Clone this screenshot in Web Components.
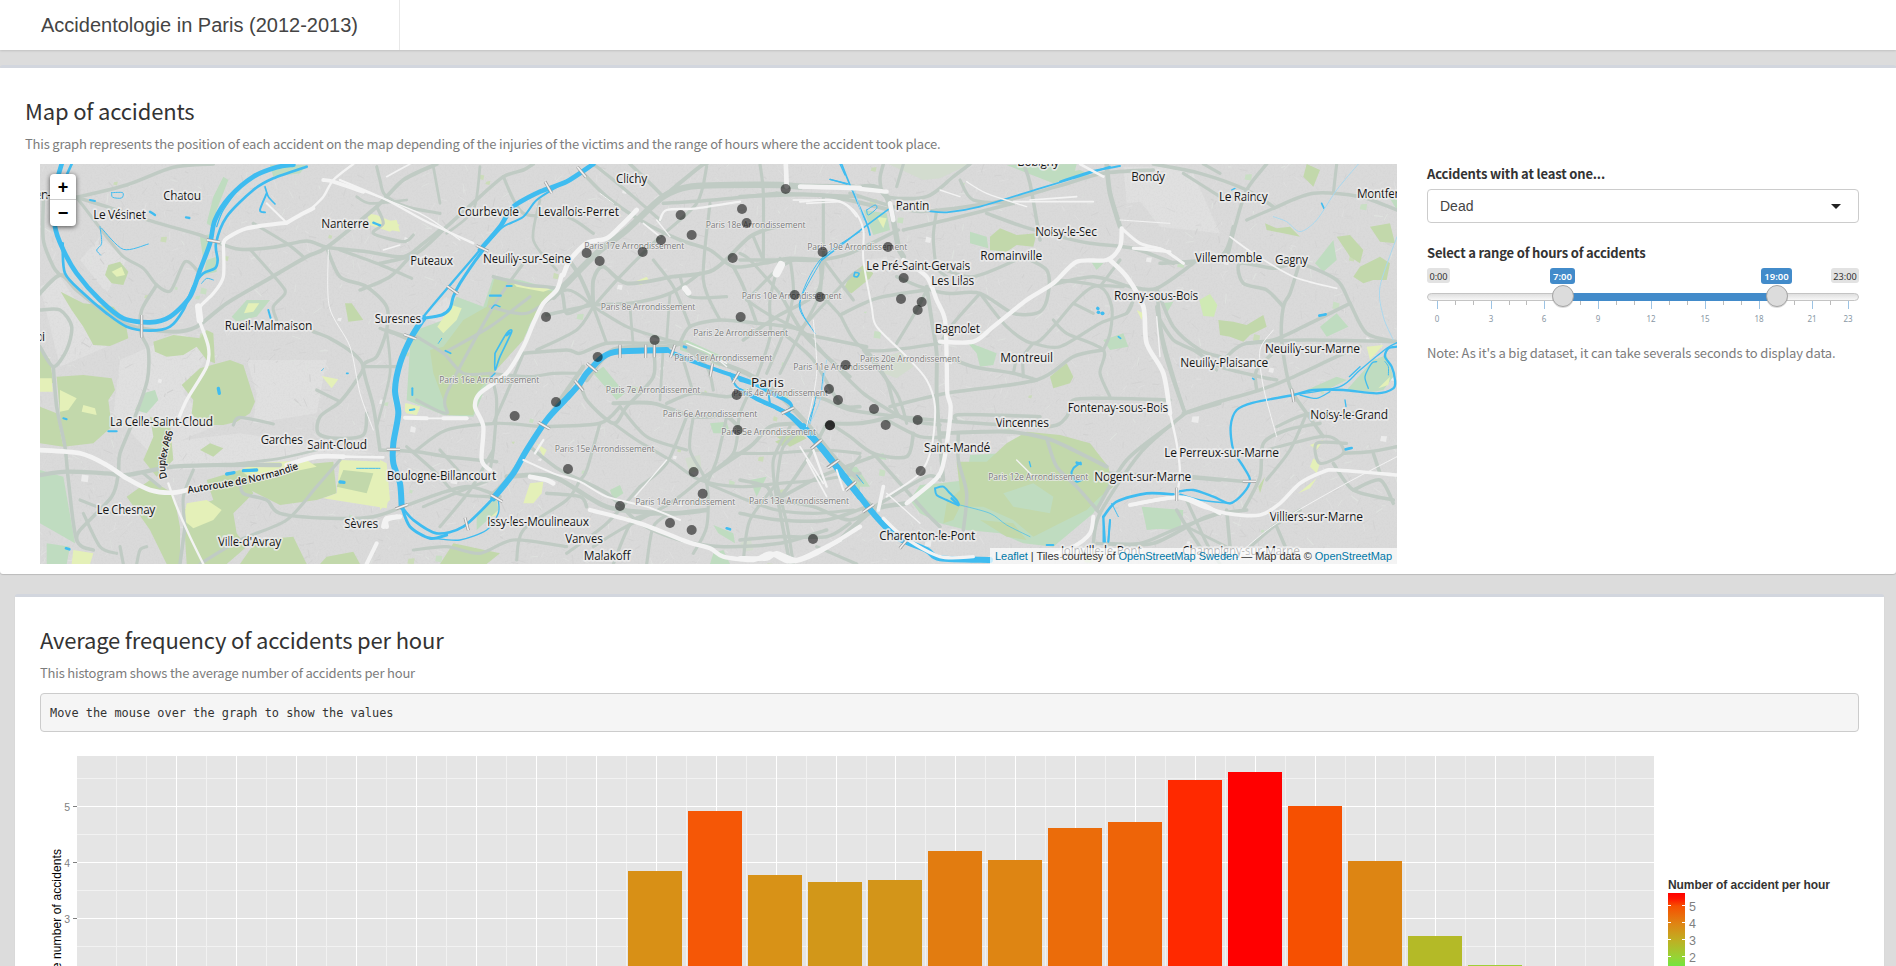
<!DOCTYPE html>
<html lang="en">
<head>
<meta charset="utf-8">
<title>Accidentologie in Paris (2012-2013)</title>
<style>
html,body{margin:0;height:966px;overflow:hidden;background:#dcdcdc;font-family:"Noto Sans CJK SC","Noto Sans",sans-serif;color:#333}
</style>
</head>
<body>
<dash-app></dash-app>
<script>
const define=(name,html,after)=>customElements.define(name,class extends HTMLElement{
  connectedCallback(){
    if(this.shadowRoot)return;
    this.attachShadow({mode:'open'}).innerHTML=html;
    if(after)after.call(this,this.shadowRoot);
  }
});

/* Text line tracked so that it fills exactly w pixels */
define('fit-text','<style>:host{display:block;white-space:nowrap}span{display:inline-block}</style><span><slot></slot></span>',function(r){
  const s=r.querySelector('span'),w=+this.getAttribute('w'),n=this.textContent.length;
  s.style.letterSpacing=((w-s.getBoundingClientRect().width)/n).toFixed(4)+'px';
});

define('top-bar',`<style>:host{display:flex;height:50px;background:#fff;box-shadow:0 1px 2px rgba(0,0,0,.12);font:20px/50px "Liberation Sans",Arial,sans-serif;color:#444}
.brand{box-sizing:border-box;width:400px;padding-left:41px;border-right:1px solid #e8e8e8}</style><div class="brand"><slot></slot></div>`);

define('content-box',`<style>:host{display:block;box-sizing:border-box;background:#fff;border-top:3px solid #d2d6de;border-radius:3px;box-shadow:0 1px 1px rgba(0,0,0,.15)}</style><slot></slot>`);

define('drop-down',`<style>:host{display:flex;align-items:center;justify-content:space-between;box-sizing:border-box;height:34px;border:1px solid #ccc;border-radius:4px;padding:0 17px 0 12px;font:14px "Liberation Sans",Arial,sans-serif;color:#444}
i{width:0;height:0;border:5px solid transparent;border-top-color:#222;border-bottom:0}</style><slot></slot><i></i>`);

define('info-pre',`<style>:host{display:block;box-sizing:border-box;height:39px;padding:0 9px;border:1px solid #ccc;border-radius:4px;background:#f5f5f5;font:11.9px/38px "DejaVu Sans Mono",monospace;color:#333}</style><slot></slot>`);

define('range-slider','<style>:host{display:block;height:62px}svg{display:block;overflow:visible}</style><div></div>',function(r){
  let s='';
  for(let i=0;i<24;i++){
    const x=Math.round(10.1+i*17.86)+.5,big=i%3===0||i===23;
    s+=`<path d="M${x} 33V${big?41:37}" stroke="${big?'#9cc3e4':'#bbb'}"/>`;
    if(big)s+=`<text x="${x-.5}" y="54" text-anchor="middle" font-size="8" fill="#8a98a5">${i}</text>`;
  }
  const tag=(x,w,t,on)=>`<rect x="${x}" y="0" width="${w}" height="${on?16:15}" rx="3" fill="${on?'#428bca':'#e2e2e2'}"/><text x="${x+w/2}" y="11.5" text-anchor="middle" font-size="${on?9.5:9.2}" ${on?'font-weight="600"':''} fill="${on?'#fff':'#333'}">${t}</text>`;
  const knob=x=>`<circle cx="${x}" cy="29" r="11" fill="#777" opacity=".25"/><circle cx="${x}" cy="28" r="10.5" fill="#dcdcdc" stroke="#a5a5a5"/>`;
  r.querySelector('div').innerHTML=`<svg width="432" height="62" font-family="'Noto Sans',sans-serif"><defs><linearGradient id="g" x2="0" y2="1"><stop stop-color="#ddd"/><stop offset="1" stop-color="#fafafa"/></linearGradient></defs>${s}
  <rect x=".5" y="25.5" width="431" height="7" rx="4" fill="url(#g)" stroke="#c4c4c4"/><rect x="136" y="25" width="214" height="8" fill="#428bca"/>
  ${tag(0,23,'0:00')}${tag(404,28,'23:00')}${tag(123,25,'7:00',1)}${tag(334,31,'19:00',1)}${knob(136)}${knob(350)}</svg>`;
});

define('hour-histogram','<style>:host{display:block}svg{display:block}</style><div></div>',function(r){
  let s='<rect x="37" width="1577" height="260" fill="#e5e5e5"/>';
  const X0=136.5,ST=59.957;
  for(const y of [22.5,78.5,134.5,190.5])s+=`<path d="M37 ${y}H1614" stroke="#f2f2f2"/>`;
  for(let k=-1;k<24;k++){const x=Math.floor(X0+(k+.5)*ST)+.5;s+=`<path d="M${x} 0V210" stroke="#f2f2f2"/>`}
  s+='<path d="M76.5 0V210M1575.5 0V210" stroke="#f2f2f2"/>';
  for(let k=0;k<24;k++){const x=Math.floor(X0+k*ST)+.5;s+=`<path d="M${x} 0V210" stroke="#fff"/>`}
  [[50.5,5],[106.5,4],[162.5,3]].forEach(([y,n])=>s+=`<path d="M37 ${y}H1614" stroke="#fff"/><path d="M33 ${y}H37" stroke="#7f7f7f"/><text x="30" y="${y+4}" text-anchor="end" font-size="10.5" fill="#7f7f7f">${n}</text>`);
  const bars=[[115,'d89016'],[55,'f55706'],[119,'d89217'],[126,'d29719'],[124,'d39519'],[95,'e27c10'],[104,'de8513'],[72,'eb6c0a'],[66,'ee6408'],[24,'ff2900'],[16,'ff0000'],[50,'f65001'],[105,'dd8513'],[180,'b4ba27'],[209,'a0cf36']];
  bars.forEach(([y,c],i)=>s+=`<rect x="${588+i*60}" y="${y}" width="54" height="${230-y}" fill="#${c}"/>`);
  s+='<text transform="translate(21 93) rotate(-90)" text-anchor="end" font-size="12" letter-spacing=".1" fill="#000">Average number of accidents</text>';
  s+='<text x="1628" y="133" font-size="12" font-weight="bold" textLength="162" fill="#333">Number of accident per hour</text><defs><linearGradient id="h" gradientUnits="userSpaceOnUse" x1="0" x2="0" y1="137" y2="210"><stop stop-color="#f00"/><stop offset=".08" stop-color="#ff1500"/><stop offset=".18" stop-color="#f65001"/><stop offset=".42" stop-color="#df8413"/><stop offset=".64" stop-color="#c0ae22"/><stop offset=".88" stop-color="#96d435"/><stop offset="1" stop-color="#74e440"/></linearGradient></defs><rect x="1628" y="137" width="17" height="80" fill="url(#h)"/>';
  [5,4,3,2].forEach((n,i)=>s+=`<path d="M1628 ${149.5+i*17}h3M1642 ${149.5+i*17}h3" stroke="#fff"/><text x="1649" y="${155+i*17}" font-size="12.5" fill="#7f7f7f">${n}</text>`);
  r.querySelector('div').innerHTML=`<svg width="1819" height="210" font-family="'Liberation Sans',Arial,sans-serif">${s}</svg>`;
});

/* ---- street map ---- all lists are in tile space: three units per screen pixel, one origin per tile */
const TILES={A:[0,0],B:[40,160],C:[380,160],D:[740,160],E:[1060,160]};
const P=s=>s.trim().split(/\s+/).map(p=>p.split(',').map(Number));
const curve=s=>{const p=P(s);let d='M'+p[0];
  for(let i=0;i<p.length-1;i++){const a=p[i-1]||p[i],b=p[i],c=p[i+1],e=p[i+2]||c,k=7;
    d+=`C${b[0]+(c[0]-a[0])/k},${b[1]+(c[1]-a[1])/k} ${c[0]-(e[0]-b[0])/k},${c[1]-(e[1]-b[1])/k} ${c}`}
  return d};
const G='#c2d8ab',T='#bfdcc0',Y='#e4f0b8',L='#d3dccf',LT='#e0e0e0';
const AREAS={B:[
 [LT,'240,600 420,520 520,560 430,700 520,800 330,880 220,760'],[LT,'620,600 860,600 830,760 640,790 650,700'],[LT,'0,380 60,350 200,560 60,620'],[LT,'350,850 600,820 1000,880 600,920 400,930'],[LT,'120,300 180,230 260,300 200,400'],
 [G,'62,395 130,430 220,440 255,480 265,535 210,558 160,555 130,500 95,450'],
 [G,'340,545 400,525 480,535 500,510 520,520 525,610 500,600 470,560 430,585 380,590 345,575'],
 [G,'425,675 480,625 570,600 610,615 645,725 630,760 590,785 550,795 480,795 455,760 460,720'],
 [G,'50,650 130,645 215,655 225,690 205,720 215,800 160,850 70,860 60,760'],[Y,'60,690 110,715 85,750 60,755'],[Y,'130,735 165,745 170,765 125,755'],
 [G,'0,560 30,600 40,670 0,665'],[Y,'0,655 35,655 38,695 0,695'],[G,'0,740 50,760 70,860 0,850'],
 [T,'285,750 310,700 345,690 355,720 320,760'],[G,'330,770 390,790 400,900 350,950 310,900 340,830'],
 [G,'480,870 510,850 550,865 520,890'],[G,'260,1010 330,960 400,1000 420,1100 420,1212 380,1212 330,1110'],
 [G,'500,960 600,930 640,1000 580,1060 590,1120 620,1160 560,1212 440,1212 430,1050 520,1020'],[Y,'430,1080 440,1030 500,1020 545,1050 520,1080 460,1105'],
 [G,'600,930 720,920 880,905 890,1000 830,1020 720,1035 620,985'],[Y,'600,930 650,910 800,900 830,920 640,960'],
 [Y,'890,1000 900,900 1030,905 1045,1010 1040,1045 850,1015'],[G,'910,930 1000,940 980,1000 890,980'],
 [G,'650,1140 760,1130 800,1212 600,1212'],[G,'860,1190 940,1175 960,1212 840,1212'],[G,'1240,1150 1380,1180 1340,1212 1200,1212'],
 [T,'0,930 70,950 105,1150 0,1090'],[T,'20,1150 90,1160 80,1212 20,1212'],[Y,'100,1170 160,1180 150,1212 95,1212'],
 [G,'205,315 240,305 265,335 250,375 215,370 195,345'],[Y,'215,335 245,320 255,345 230,350'],
 [T,'575,470 620,420 690,420 650,470 590,485'],[Y,'612,460 625,430 658,430 640,455'],[Y,'845,648 895,658 875,685'],
 [Y,'980,160 1010,165 1080,195 1050,215 990,195'],[T,'500,300 530,290 530,335 490,345'],[T,'500,190 520,110 550,50 565,60 530,150 515,200'],
 [T,'690,15 800,15 780,40 700,50'],[T,'480,230 520,220 490,300'],[G,'915,430 935,430 970,480 925,485'],[Y,'1095,730 1140,740 1130,765 1095,755']],
C:[
 [LT,'120,470 200,410 230,450 180,490'],[T,'230,410 310,440 340,350 420,360 530,390 460,470 440,520 330,650 280,770 190,765 80,720 90,560 110,510 190,480'],
 [G,'320,440 345,350 520,395 450,490 430,540 330,650 290,700 280,765 200,765 190,720 160,640 150,570 190,560 250,480'],[Y,'172,500 215,435 245,445 230,480 190,520'],[Y,'400,370 520,385 490,395 410,380'],[Y,'80,730 120,740 110,765 78,760'],
 [Y,'430,1030 450,970 490,965 485,1000 460,1030'],[Y,'470,850 500,870 490,890'],[Y,'765,365 800,350 810,365 780,375'],[T,'640,640 670,620 735,700 710,720'],[T,'690,990 720,975 730,1000 700,1020'],
 [T,'900,545 920,540 1030,590 1020,620 960,590 900,570'],[T,'990,790 1040,785 1050,820 1000,820'],[G,'1190,830 1260,820 1280,835 1230,860'],[L,'915,895 960,885 965,930 930,940'],[L,'1080,1150 1110,1130 1120,1170 1090,1175'],
 [T,'1000,1095 1060,1120 1065,1150 1015,1120'],[Y,'330,1050 355,1030 350,1065 310,1080'],[T,'290,1060 350,1015 355,1050 290,1110'],[T,'1110,960 1160,950 1130,1010'],[T,'1000,1180 1030,1170 1050,1212 990,1212'],[Y,'0,900 20,910 30,1020 0,1050'],[T,'1390,920 1440,960 1440,1000'],[Y,'0,185 50,180 60,215 0,205']],
D:[
 [LT,'1150,20 1330,20 1340,110 1160,130'],[L,'445,12 690,12 600,55 550,60'],[T,'800,15 1010,12 1000,50 940,70'],[LT,'380,300 440,290 450,330 400,340'],
 [G,'310,390 330,345 370,315 400,340 390,355 335,400'],[T,'370,150 440,160 450,210 400,225'],[Y,'410,170 440,175 430,205'],
 [G,'750,230 780,205 830,225 890,220 880,260 830,255 800,275 750,270'],[T,'690,215 740,230 745,265 690,250'],
 [L,'440,590 480,575 520,620 470,655 430,640'],[T,'680,545 720,560 770,580 760,615 720,620 710,580'],[G,'930,650 960,625 980,610 1000,650 990,670 940,685'],[T,'1090,540 1150,520 1165,560 1110,570'],[Y,'1190,450 1210,460 1205,480'],[T,'1050,300 1090,310 1070,330'],
 [T,'540,975 600,970 680,960 690,885 790,880 890,840 900,860 1020,900 1100,990 1060,1060 1000,1110 940,1160 850,1150 780,1120 680,1110 600,1090 540,1060 510,1020'],
 [G,'650,905 740,905 800,850 860,815 960,825 1050,850 1105,920 1120,980 1080,1010 1040,1050 960,1090 880,1130 820,1080 730,1040 660,1040 640,1080 610,1090 620,1030 660,990'],
 [G,'720,1080 820,1090 860,1140 800,1130'],[T,'790,1000 880,970 940,1010 930,1060 820,1040'],[LT,'800,830 840,825 835,890 805,880'],[T,'1210,1040 1330,1060 1320,1100 1220,1110'],[G,'105,845 160,820 170,835 130,860'],[T,'300,920 350,920 390,980 360,980'],[T,'380,890 430,880 440,900']],
E:[
 [LT,'190,60 400,40 480,220 300,200'],[G,'730,50 740,12 780,30 760,80'],[T,'0,40 60,30 100,50 0,60'],[G,'615,190 650,205 690,200 720,230 670,220 620,210'],[T,'765,310 820,240 830,300 790,335'],[G,'830,230 870,225 910,270 900,310 870,290'],[G,'900,320 960,290 990,310 980,360 940,360 910,370 880,350'],[G,'930,200 990,190 1005,250 960,245'],[T,'980,100 1011,120 1011,150'],['#cfe9b4','418,420 450,402 472,435 462,470 430,468'],
 [G,'475,480 520,485 560,495 610,465 620,500 570,525 550,545 510,530 480,525'],[T,'780,500 830,460 865,500 800,530'],[Y,'920,560 970,555 930,600'],[T,'860,690 940,600 980,585 1000,650 970,690 940,695 850,690'],[T,'740,690 830,650 860,660 800,690'],[Y,'955,685 990,650 985,675'],
 [Y,'750,855 790,840 770,870'],[Y,'760,895 780,910 770,940 750,920'],[T,'245,1040 370,1050 360,1110 260,1105'],[Y,'715,1000 770,955 750,985'],[T,'310,430 340,425 320,460'],[G,'600,1000 615,950 595,980']]};

/* roads: [width, points] */
const ROADS={B:[
 [9,'110,112 260,75 400,22 520,12'],[9,'110,112 200,140 340,185 480,225 520,243 600,268 700,262 800,243 860,262 980,275 1090,290 1150,250 1200,210'],
 [8,'110,112 200,230 250,290 310,325 350,375 392,392 435,305 475,335'],[9,'350,375 305,450 303,520 325,570 322,660 285,770 240,880 235,940 215,1010 120,1110 110,1140'],
 [10,'-10,410 60,345 110,390 200,460 280,500 400,515 470,500 560,430 680,360 800,290 860,262 1010,140 1090,60 1190,12'],
 [9,'10,120 10,240 40,320 60,345'],[9,'0,450 60,450 95,500 80,570 40,620 0,560'],[9,'40,620 50,740 75,860 85,960 110,1140 160,1170'],
 [11,'0,945 80,935 200,940 260,945 400,920 560,915 720,915'],[7,'560,915 720,895 830,870'],[8,'630,268 720,370 735,400 700,440 710,480'],[9,'820,515 870,535 940,580 970,620 950,660 900,725 840,770 835,820 890,835 970,825 980,760'],[8,'830,690 900,725'],
 [9,'860,262 900,350 980,380 1040,440 1040,510 1010,590 970,620 1000,740 1020,870'],[8,'900,270 1010,310 1115,355'],[8,'640,190 740,250 790,290'],[7,'950,110 990,130 1100,120'],[8,'1010,140 1030,190 1000,220 1090,245 1120,225'],
 [8,'1010,20 1020,60 1035,105 1100,140 1200,160'],[9,'1040,510 1100,530'],[8,'970,620 1080,620'],[8,'435,1100 430,1010 460,930'],[9,'435,1100 420,1212'],
 [9,'600,960 610,1000 680,1020 720,1060 870,1075 1000,1070 1090,1040 1200,1000 1290,980 1380,1010'],[8,'480,1212 600,1140 740,1080 830,980 900,900'],[8,'120,1020 220,1060'],[8,'240,1160 250,1212'],[8,'580,795 600,772 700,792'],[8,'310,940 360,980'],[8,'290,1212 300,1170 320,1160'],
 [9,'960,390 1050,350 1110,290'],[7,'1180,20 1200,130'],[7,'1040,510 1050,640 1010,800'],[8,'130,1060 180,1160 230,1180']],
C:[
 [16,'520,410 560,370 650,280 740,210 850,110 930,80 1050,75 1200,75 1260,80'],[9,'0,310 110,280 200,200 300,110 370,50 430,30 460,12'],[8,'370,50 430,160 560,170 640,220'],[9,'600,30 680,110 780,180 900,240 990,270 1060,320 1150,310 1230,295 1330,300'],
 [8,'640,12 700,60 760,110 840,180'],[10,'850,110 960,20 980,12'],[9,'850,110 800,60 750,12'],[10,'640,440 640,360 670,320 740,370 880,350 1000,330 1110,230 1190,200'],[9,'340,350 440,375 540,390 560,460 630,430'],[9,'500,465 640,435 750,430 870,400 960,340'],
 [8,'640,440 740,500 830,530 900,550'],[8,'640,440 680,550'],[8,'640,440 590,510 470,570'],[8,'640,440 560,390 440,460 330,440'],[8,'640,440 720,350 830,240 950,130 980,20'],[9,'430,580 560,570 600,580 680,550 800,550 880,545'],[10,'640,440 600,350 560,290'],
 [12,'900,550 1000,600 1100,640 1180,690 1280,790 1370,900 1440,960'],[11,'610,620 520,750 450,860 380,960 330,1010'],[12,'620,660 700,570 860,560 900,550'],[9,'900,550 930,500 1020,480 1130,490 1260,510 1340,590 1410,650'],[8,'930,500 880,380 820,300'],[8,'1020,480 970,360 990,130'],
 [9,'1130,490 1090,380 1060,320'],[8,'1200,295 1170,420 1170,530 1130,650 1080,760 1060,880 960,960'],[8,'1230,295 1240,400 1210,520 1160,640'],[9,'1330,300 1310,400 1190,470 1090,540'],[8,'1260,510 1400,360 1440,330'],[8,'1260,510 1160,460 1100,420'],[8,'1330,300 1420,420'],
 [9,'1210,520 1300,600 1380,730 1440,740'],[10,'700,730 820,730 940,770 1040,770 1090,820'],[9,'820,560 820,650 740,740 700,790 620,720 600,660'],[8,'720,740 800,830 920,870'],[9,'500,800 660,790 720,740'],[8,'660,790 620,930 600,960'],[8,'700,790 770,840 870,900 960,960 1080,980 1200,970 1320,960 1440,940'],
 [9,'860,730 940,700 1040,710 1080,700'],[8,'940,770 930,870 980,970 980,1100 940,1180'],[8,'1000,690 980,620 900,550'],[9,'450,860 540,930 680,1000 780,1090 900,1140 1030,1160 1200,1150 1340,1110'],[12,'380,950 520,950 680,1040 860,1060 980,1050'],[8,'780,980 860,910 920,770'],[8,'960,960 870,1030 720,1110 640,1160'],
 [10,'960,960 1110,860 1170,800 1260,790'],[8,'1190,970 1210,860 1280,800'],[8,'1190,970 1220,1090 1240,1212'],[8,'980,970 1100,1020 1190,1050 1300,1060 1420,1050'],[8,'1190,970 1110,1080 1090,1200'],[8,'100,1170 200,1160 300,1180 400,1140 560,1160'],[8,'410,1200 430,1110 560,1020 600,960'],
 [9,'0,870 110,875 200,890 350,905'],[8,'110,870 200,810 350,790 480,800'],[8,'330,640 350,720 340,870 330,930'],[8,'110,720 200,760 200,700 340,440 430,310'],[8,'110,530 190,580 250,640 330,640'],[8,'190,580 330,500 450,410'],[8,'90,540 40,520 0,505'],
 [8,'80,860 170,940 230,1000 330,1010'],[8,'180,870 260,960'],[8,'340,870 270,990 180,1100'],[8,'130,1040 250,990 330,960'],[8,'430,580 380,700 340,790'],[8,'330,640 450,650 520,640 600,640'],[9,'1190,100 1440,110'],[9,'850,130 1000,120 1190,100'],[8,'1140,12 1150,100 1150,300'],[8,'1330,110 1330,300'],
 [8,'1120,230 1150,300'],[8,'700,1212 760,1080 860,1060'],[8,'800,1212 820,1100 870,1060'],[8,'560,1180 680,1090 780,980'],[8,'1100,420 1190,330 1240,300'],[8,'900,350 930,410 1040,410'],[8,'1060,880 1180,880 1330,870 1440,880'],[7,'750,440 760,560'],[7,'870,400 860,540'],[8,'1040,770 1010,900 980,970'],[8,'940,700 910,600'],[7,'850,560 840,720'],[9,'500,1000 600,1010 620,1040'],[7,'480,120 460,240 530,330'],[7,'200,220 280,150 300,20']],
D:[
 [14,'340,85 400,80 440,110 460,180 475,260 490,290'],[12,'0,75 340,80'],[10,'0,110 240,105 450,150'],[9,'430,12 420,60 440,110 560,110 640,50 690,12'],[9,'330,100 500,150 600,150 800,120 950,80 1090,40 1240,30'],[9,'490,210 620,180 820,130'],
 [9,'475,210 330,280 240,300 150,300 0,300'],[8,'590,150 580,230 590,320 620,350'],[9,'740,160 850,200 960,230 1050,250 1180,265 1300,310'],[9,'850,290 920,330 925,400 900,455 820,460 720,400 620,400 540,380 470,350'],[8,'720,400 640,490 600,550'],[8,'720,400 800,500 880,550 940,500 1000,430 1060,380 1150,380'],
 [10,'560,380 575,480 590,580 590,700 600,850 610,960'],[9,'300,465 410,415 560,390'],[8,'300,465 380,570 600,550'],[8,'470,550 530,450 560,390'],[8,'240,400 300,465'],[8,'240,300 240,400 180,520 120,640'],[9,'120,400 190,520 270,600 370,700 480,770'],[8,'120,400 30,300 0,280'],
 [9,'180,520 380,560'],[9,'380,570 440,660 480,770 600,795'],[8,'370,570 470,700 500,790'],[9,'450,740 620,700 890,660 1000,590 1090,570'],[9,'620,590 700,620 820,640 890,660'],[8,'880,550 850,590 850,650'],[8,'830,590 820,640'],[8,'880,550 960,560 1080,490 1160,460 1180,420'],
 [9,'200,700 260,720 330,750 480,770 650,785 920,800 980,770 1000,720 1100,715 1290,720'],[9,'650,785 650,765 750,765 900,770'],[10,'270,790 360,790 460,770'],[9,'270,790 330,830 400,880 500,890 520,820'],[9,'440,780 540,830 620,830'],[10,'600,820 800,815 920,835 1000,870 1100,920'],
 [9,'920,835 950,920 1010,980 1080,1060'],[9,'655,820 655,900 680,1000 670,1110'],[9,'0,960 80,980 110,1020 200,900 260,790'],[9,'110,1020 240,950 400,890'],[9,'110,1020 220,1040 330,1080 420,1030 560,950 600,960'],[9,'0,1060 120,1080 260,1080 380,1040'],[8,'110,1020 100,900 150,800'],
 [9,'110,1000 130,1110 150,1212'],[9,'0,1140 120,1130 260,1130 330,1090'],[8,'230,1160 350,1212'],[9,'400,880 480,970 560,1060 600,1100'],[8,'360,890 320,960 400,1040'],[12,'300,1140 400,1050 500,1030'],[9,'1360,310 1250,385 1170,380 1060,350 930,375'],[9,'1250,385 1300,500 1380,570 1440,590'],
 [9,'1250,385 1265,520 1300,650 1335,760'],[8,'1160,460 1190,400'],[9,'1335,760 1440,730'],[9,'1335,760 1200,880 1080,1060 1060,1150'],[9,'1110,940 1310,950 1440,960'],[8,'1335,1010 1400,1150 1440,1212'],[8,'1000,430 1060,460'],[8,'940,480 980,520 1090,570 1080,640 1110,710'],
 [12,'1100,12 1110,100 1140,200'],[8,'1070,1150 1200,1150 1300,1110 1440,1060'],[9,'850,12 870,70 900,240'],[8,'660,60 700,120 820,130'],[8,'490,12 470,80'],[8,'590,320 700,350 850,290'],[8,'1390,12 1440,40'],[8,'1330,40 1440,110']],
E:[
 [9,'280,12 420,40 560,90 640,140'],[9,'640,145 760,100 900,110 1011,150'],[8,'640,145 560,180'],[9,'620,12 560,90 525,200 505,280'],[8,'820,100 830,12'],[9,'300,310 480,290 520,200'],[9,'380,310 430,300'],[9,'715,320 690,400 670,440 665,540 690,680 740,760 790,830'],
 [9,'670,440 620,390 550,370 540,310 640,325 715,310 830,360 870,430 920,520 1011,545'],[9,'560,550 640,540 730,500 870,430'],[9,'500,590 560,550 740,540 1011,545'],[9,'300,480 340,540 400,570 480,620 600,650 650,660'],[8,'410,570 470,630'],[9,'370,760 460,730 600,690 690,655 830,590 900,560'],
 [9,'590,690 590,630 660,560'],[9,'340,790 200,900 110,1050'],[9,'290,440 310,560 340,660 375,760'],[8,'650,800 750,760 920,760'],[9,'550,1050 600,950 610,850 680,810 780,790'],[8,'620,870 780,830 830,840 850,880 780,910 770,850 860,850'],[9,'1011,860 930,875 850,880'],[9,'940,880 960,940'],
 [9,'820,910 880,990 1000,1020'],[9,'880,990 960,960 1000,1030'],[9,'350,1050 380,1100 440,1190'],[9,'130,1150 280,1150 440,1070 560,1050'],[9,'400,950 560,965'],[9,'500,1050 510,1160'],[9,'650,1100 680,1170'],[9,'560,1170 640,1100 720,1050'],[7,'380,1100 500,1160'],[8,'740,760 690,870 620,960'],[8,'0,360 120,380 155,440 150,520 130,570'],[8,'120,380 180,300']]};

/* motorways and rail yards */
const WHITE={B:[
 [14,'-10,870 120,880 200,915 260,955 330,990 400,998 460,985'],[14,'740,915 830,890 910,890'],[8,'910,890 1030,892'],[12,'550,250 560,235 620,205 740,188'],[12,'740,188 790,160 820,145'],[6,'740,188 680,130'],[7,'810,150 850,110 880,60 940,12'],[10,'550,250 550,350 520,400 480,440 475,470 505,560 500,620 440,720 410,790'],[7,'385,970 410,1040 450,1130 490,1212'],[20,'475,440 480,480'],
 [12,'850,60 880,65 970,95'],[7,'900,60 1040,120 1150,180 1300,250'],[4,'920,75 1140,160 1260,240'],[3,'865,270 868,440 930,560 960,700 1000,810'],[14,'1070,1070 1040,1080 1040,1100'],[12,'1010,1150 980,1212'],[5,'1040,50 1110,12'],[4,'1030,270 1080,255']],
C:[
 [14,'550,345 570,300 620,250 680,235 720,200 770,150'],[13,'545,345 530,390 490,430 460,490 430,560 380,640 300,700 285,740 310,800 305,900 330,930'],[12,'75,773 140,775'],[5,'140,775 220,775'],[12,'190,775 260,775'],[13,'1217,12 1220,80'],[13,'1260,80 1440,83'],[7,'840,180 860,150 950,145 1080,125'],[5,'790,190 840,230'],[4,'830,180 870,230'],
 [24,'1203,315 1190,340'],[18,'915,385 925,398'],[14,'450,950 500,960 520,970'],[13,'630,1050 780,1090 920,1145 990,1165 1030,1190 1120,1200 1170,1180 1230,1205 1310,1180 1440,1100'],[6,'430,900 520,940 600,965 680,1010 800,1040 900,1080'],[4,'765,1010 860,900'],[7,'465,880 490,840'],
 [14,'10,1100 20,1075 60,1070'],[4,'1000,590 1040,610'],[5,'1260,860 1330,970'],[7,'1300,870 1340,980'],[5,'1240,120 1380,125 1430,170'],[3,'660,100 700,130'],[4,'920,550 990,580 1040,620'],[3,'1280,800 1310,640 1300,480']],
D:[
 [13,'138,12 140,80'],[13,'180,80 340,85 440,95'],[14,'450,130 460,180'],[13,'490,300 560,350 590,420 615,480 620,600 622,700 632,740 625,820 610,910 590,955 500,1030'],[6,'180,125 280,120 340,150 370,210 370,300 395,440 410,500 500,590 560,660 585,740 575,860 540,940 440,1010'],
 [13,'600,545 700,545 760,500 860,420 940,370 1010,305 1100,300 1140,260 1145,205'],[14,'1110,300 1160,350 1210,440 1220,550 1270,640 1290,760'],[7,'1290,760 1310,850 1320,940 1310,1010'],[9,'1145,205 1200,250 1270,270 1330,310'],[9,'1180,265 1290,275'],[5,'200,130 300,125'],
 [14,'0,1195 80,1195 110,1180 170,1200 240,1170 300,1140'],[10,'430,1075 490,1130 600,1190 700,1190'],[11,'430,980 415,1050'],[4,'440,1000 540,1090'],[12,'1060,1070 1050,1120 1000,1160 920,1190'],[11,'1170,1035 1330,1012 1440,1060'],[5,'820,125 1060,125'],[4,'680,65 740,100 860,140'],[3,'1140,180 1290,190'],[4,'600,90 660,110'],[5,'870,120 1010,110'],[8,'1020,12 1090,50'],[5,'200,900 260,1010'],[6,'290,930 310,990'],[4,'830,900 880,950']],
E:[
 [11,'210,1035 350,1012 430,1040 500,1060 600,1065 660,1030 720,970 790,935 830,930 1011,945'],[5,'510,230 580,280 700,350 830,385'],[3,'1011,890 840,980 650,1090 550,1170'],[3,'640,510 600,570 610,680 650,830'],[6,'220,265 300,265 370,310'],[4,'290,470 300,590']]};
const WATER={B:[
 [14,'65,12 45,90 45,200 70,270 110,340 180,420 250,475 330,487 390,470 450,410 480,330 510,250 525,180 570,110 640,50 710,22 760,14'],[8,'95,12 80,45'],[8,'68,250 75,340 130,400 200,460 260,500 330,512 390,500 430,450 460,380 490,340 525,325 533,300 528,250 560,170 640,90 700,55 800,20'],[4,'530,200 550,150 600,80'],
 [5,'675,80 685,110 705,132'],[6,'680,100 660,150 675,157'],[3,'180,200 185,250 170,270 182,285'],[3,'185,205 250,268 325,252'],[3,'215,98 248,98 245,114 218,112 215,98'],[6,'150,120 165,123'],[7,'330,155 345,165'],[7,'438,172 448,174'],[6,'685,450 692,475'],[3,'485,370 500,355 520,360'],[7,'1000,188 1020,196'],[10,'535,685 538,700'],[10,'560,942 582,938'],[10,'610,932 650,930'],[10,'900,966 912,967'],[6,'205,814 230,814'],[6,'70,775 80,778'],[3,'845,632 850,626'],[5,'920,640 924,640'],[8,'78,1165 88,1168'],[3,'950,925 1020,925']],
C:[
 [14,'640,12 560,65 480,95 400,140 360,200 300,270'],[6,'540,75 470,120 430,170 370,200 330,240'],[7,'300,270 240,340 180,410 130,470'],[9,'310,270 280,310 240,370 220,410 210,445 185,465 130,475'],[18,'130,475 95,530 60,610 45,690 55,760 40,850 40,910 60,970 65,1040'],
 [8,'65,1040 100,1080 170,1120 250,1100 340,1015'],[9,'65,1040 90,1100 150,1135 200,1125'],[4,'160,1135 240,1140 320,1110 355,1060 355,1020'],[18,'340,1015 400,940 440,870 500,780 560,715 600,670 620,640 670,590 720,574 860,570'],[12,'860,570 940,605 1040,640 1110,665'],
 [6,'1050,640 1070,680 1130,720 1200,750'],[6,'1110,665 1170,700 1210,720 1235,740 1225,760'],[5,'1165,690 1170,735'],[12,'1190,745 1230,765 1270,800'],[20,'1270,800 1330,870 1400,960 1440,1010'],[5,'345,580 380,520 395,515 360,590 345,630 345,580'],[8,'380,525 390,518'],[7,'330,407 362,407'],[4,'335,445 345,435 360,440'],[6,'380,378 395,378'],[3,'175,550 185,535'],[5,'196,572 212,580'],[6,'97,685 97,705'],[6,'90,750 103,748'],[4,'1380,12 1395,45'],[4,'1350,58 1400,72'],[3,'1440,215 1320,300 1260,430 1305,520'],[3,'1305,730 1280,800'],[8,'1040,1105 1050,1108'],[4,'330,655 345,640'],[8,'912,560 918,562'],[3,'1330,640 1325,690']],
D:[
 [18,'190,800 250,870 330,970 400,1060 470,1130 560,1170 600,1195 750,1200'],[9,'0,660 60,680 140,720 155,740 140,755'],[12,'0,690 60,720 140,760 210,830'],[5,'85,690 90,735'],[5,'445,148 375,200 245,300'],[3,'245,300 178,430 212,500'],[5,'305,12 330,75 380,190 390,225'],[4,'270,58 325,72'],[3,'380,150 405,135 410,145 385,165 380,150'],[5,'565,153 620,157 720,140 900,85 1000,55 1110,20'],
 [5,'345,337 357,340 352,350 342,348 345,337'],[6,'585,985 610,980 630,1000 650,1020 655,1035 620,1020 590,1005 585,985'],[8,'635,1015 655,1035'],[6,'1022,908 1000,925 995,945 1010,965 1025,960'],[8,'1010,908 1022,912'],[4,'868,905 872,920'],[3,'350,945 370,970'],[10,'1073,445 1074,446'],[10,'1075,457 1076,457'],[11,'1087,460 1088,460'],[3,'230,700 210,790'],[2,'660,1035 750,1060 800,1095 870,1130'],[6,'1095,1145 1090,1070'],[6,'1105,1145 1110,1080'],[6,'920,1155 940,1155']],
E:[
 [5,'130,1145 130,1070'],[5,'145,1145 150,1080'],[8,'130,1070 170,1025 260,1000 340,1003'],[7,'355,995 400,990 460,1010 510,1030 550,1000 570,960 550,920 520,870 512,800 530,750 580,728 700,705 760,690 850,690 950,700 1000,685 1005,660 995,620 975,590 985,565 1011,560'],
 [5,'360,1003 420,1020 510,1030'],[4,'700,705 840,680 900,630 980,565 1011,548'],[4,'720,705 770,715 810,695'],[6,'0,65 90,35 180,18'],[8,'778,467 797,463'],[4,'925,685 915,650 935,610 950,605'],[3,'975,605 985,620 985,645'],[8,'857,868 875,864'],[4,'855,720 858,740'],[5,'785,130 792,145'],[4,'515,90 525,85'],[5,'578,655 582,658'],[4,'868,650 900,620'],[5,'175,530 182,535'],[3,'155,1030 175,1070']]};
const THINW={E:['895,12 830,90 770,180 720,215 680,185 640,170','1011,230 960,380 970,470 1000,540'],D:['260,600 240,720 210,790','340,80 370,180']};
/* bridges: x,y,angle */
const BRIDGES={B:['520,243,10','305,485,90','305,513,90','1238,390,35','1110,530,20','1327,265,25','1060,868,0','1085,1040,-20','1280,1092,75','1370,1015,30'],C:['505,82,60','605,36,50','720,574,90','797,574,90','823,572,90','878,574,110','994,630,100','636,623,40','597,677,50','492,797,30','1068,652,120','1223,752,-25','1308,853,-40','1358,912,-35','1412,978,-40'],D:['143,752,-25','230,852,-40','280,912,-35','333,978,-40','385,1045,-35','492,1150,-50'],E:['568,964,0','698,706,80','350,1003,90']};

const TOWNS={B:[['Chatou',370,121,483],['Le Vésinet',160,178,318],['Nanterre',844,205,987],['Courbevoie',1253,167,1437],['Puteaux',1111,315,1239],['Suresnes',1004,489,1144],['Rueil-Malmaison',554,510,817],['La Celle-Saint-Cloud',210,797,519],['Garches',662,851,789],['Saint-Cloud',802,866,981],['Boulogne-Billancourt',1040,959,1369],['Le Chesnay',170,1063,346],['Sèvres',913,1103,1015],["Ville-d'Avray",534,1157,724],['en-',-14,116,33],['oi',-12,543,15]],
C:[['Clichy',708,70,802],['Levallois-Perret',474,168,717],['Neuilly-sur-Seine',309,308,573],['Issy-les-Moulineaux',322,1099,627],['Vanves',556,1150,669],['Malakoff',611,1200,752]],
D:[['Bobigny',832,19,958],['Bondy',1174,63,1275],['Pantin',467,151,568],['Noisy-le-Sec',886,229,1071],['Romainville',721,299,907],['Le Pré-Saint-Gervais',379,330,691],['Les Lilas',574,375,703],['Rosny-sous-Bois',1122,420,1375],['Bagnolet',584,518,720],['Montreuil',781,605,939],['Vincennes',767,802,927],['Fontenay-sous-Bois',983,757,1285],['Saint-Mandé',552,875,751],['Nogent-sur-Marne',1063,962,1354],['Charenton-le-Pont',418,1141,706],['Joinville-le-Pont',963,1185,1205]],
E:[['Le Raincy',477,122,623],['Montfermeil',891,114,1084],['Villemomble',405,306,607],['Gagny',645,313,744],['Neuilly-sur-Marne',615,579,900],['Neuilly-Plaisance',361,621,625],['Noisy-le-Grand',751,776,984],['Le Perreux-sur-Marne',313,892,657],['Villiers-sur-Marne',629,1084,909],['Champigny-sur-Marne',367,1185,720]]};
const ARR={C:[['17e',613,266],['18e',977,203],['8e',662,451],['10e',1085,418],['2e',940,528],['1er',883,602],['16e',178,668],['7e',677,698],['4e',1060,708],['6e',848,770],['5e',1024,824],['15e',524,877],['14e',766,1034],['13e',1107,1031]],D:[['19e',202,271],['11e',160,629],['20e',360,605],['12e',745,959]]};
const DOTS={C:'1217,87 902,165 1086,147 1100,189 935,225 843,240 788,276 620,279 659,303 1058,294 498,471 1244,405 1320,411 1082,471 824,540 653,591 1328,276 1397,615 1347,687 1374,720 1070,705 1073,810 1350,796 1350,796 528,726 404,768 564,927 941,936 968,1001 720,1038 870,1089 935,1110 1299,1137',D:'444,261 491,354 483,417 545,426 533,450 402,747 437,795 533,780 542,933'};

define('leaflet-map',`<style>
:host{display:block;position:relative;width:1357px;height:400px;overflow:hidden;background:#d9d9d9}
svg{display:block}
.zoom{position:absolute;left:10px;top:10px;width:26px;border-radius:4px;box-shadow:0 1px 5px rgba(0,0,0,.65);background:#fff;color:#000;font:bold 18px/26px "Liberation Sans",Arial,sans-serif;text-align:center}
.zoom div{height:25px}.zoom div+div{border-top:1px solid #ccc;height:26px}
.attr{position:absolute;right:0;bottom:0;height:16px;padding:0 5px;background:rgba(255,255,255,.7);font:11px/16px "Liberation Sans",Arial,sans-serif;color:#333}
.attr b{font-weight:normal;color:#0078a8}
</style><div class="tiles"></div><div class="zoom"><div>+</div><div>−</div></div>
<div class="attr"><fit-text w="397"><b>Leaflet</b> | Tiles courtesy of <b>OpenStreetMap Sweden</b> — Map data © <b>OpenStreetMap</b></fit-text></div>`,function(r){
  const layer=(src,fn)=>Object.entries(src).map(([k,v])=>`<g transform="translate(${TILES[k]}) scale(.33333)">${fn(v)}</g>`).join('');
  const lines=(c,m=1)=>v=>v.map(([w,p])=>`<path d="${curve(p)}" stroke="${c}" stroke-width="${w*m}"/>`).join('');
  let seed=7;const rnd=()=>(seed=(seed*16807)%2147483647)/2147483647;
  let fine='';
  for(let i=0;i<2600;i++){const x=40+rnd()*1357,y=164+rnd()*400,a=rnd()*3.14,l=2+rnd()*7;fine+=`<path d="M${x.toFixed(1)} ${y.toFixed(1)}l${(l*Math.cos(a)).toFixed(1)} ${(l*Math.sin(a)).toFixed(1)}" stroke="${['#dfdfdf','#d1d1d1','#d3d3d3','#dfe2df'][i%4]}" stroke-width="${(.4+rnd()*.8).toFixed(1)}"/>`}
  for(let i=0;i<90;i++){const x=40+rnd()*1357,y=164+rnd()*400,w=2+rnd()*5;fine+=`<path d="M${x.toFixed(1)} ${y.toFixed(1)}l${w.toFixed(1)} ${(rnd()*3-1).toFixed(1)}l-1 ${w.toFixed(1)}l-${w.toFixed(1)} -1z" fill="${['#c9dfc4','#ececec','#cbdcb9'][i%3]}"/>`}
  let s=`<defs><filter id="n" x="0" y="0" width="1" height="1"><feTurbulence type="fractalNoise" baseFrequency=".55" numOctaves="2" seed="4"/><feColorMatrix values="0 0 0 0 .5  0 0 0 0 .5  0 0 0 0 .5  .8 0 0 0 -.33"/></filter>
  <path id="an" d="M188 493.5C225 487 262 483 301 468"/><path id="da" d="M167.5 478C161 463 170 448 173.5 430"/></defs>
  <rect x="40" y="164" width="1357" height="400" fill="#dadada"/>`;
  const fill=v=>v.map(([c,p])=>`<polygon points="${p}" fill="${c}" stroke="none"/>`).join('');
  s+=layer(Object.fromEntries(Object.entries(AREAS).map(([k,v])=>[k,v.filter(a=>a[0]===LT)])),fill);
  s+=`<rect x="40" y="164" width="1357" height="400" filter="url(#n)" opacity=".35"/>`+fine;
  s+=layer(Object.fromEntries(Object.entries(AREAS).map(([k,v])=>[k,v.filter(a=>a[0]!==LT)])),fill);
  s+=layer(ROADS,lines('#c0cbc4',1.18));
  s+=layer(WATER,lines('#3fbcf0'));
  s+=layer(THINW,v=>v.map(p=>`<path d="${curve(p)}" stroke="#a9d8ee" stroke-width="3"/>`).join(''));
  s+=layer(WHITE,lines('#f3f3f3'));
  s+=layer(BRIDGES,v=>v.map(b=>{const[x,y,a]=b.split(',');return`<g transform="translate(${x} ${y}) rotate(${a})"><path d="M-20 0H20" stroke="#999" stroke-width="9" stroke-linecap="butt"/><path d="M-20 0H20" stroke="#f0f0f0" stroke-width="5" stroke-linecap="butt"/></g>`}).join(''));
  const halo='paint-order="stroke" stroke="#ececec" stroke-opacity=".85"';
  s+=layer(ARR,v=>v.map(([n,x,y])=>`<text x="${x}" y="${y}" font-size="26" fill="#7c7c7c" ${halo} stroke-width="5" textLength="${n.length===2?284:n==='1er'?294:300}">Paris ${n} Arrondissement</text>`).join(''));
  s+=layer(TOWNS,v=>v.map(([t,x,y,e])=>`<text x="${x}" y="${y}" font-size="36" font-weight="500" fill="#161616" ${halo} stroke-width="10" textLength="${e-x}">${t}</text>`).join(''));
  s+=`<text x="751" y="387" font-size="13.5" font-weight="500" fill="#161616" ${halo} stroke-width="3" textLength="33">Paris</text>`;
  s+=`<text font-size="10" font-weight="600" fill="#222" ${halo} stroke-width="2.5"><textPath href="#an" textLength="114">Autoroute de Normandie</textPath></text><text font-size="10" font-weight="600" fill="#222" ${halo} stroke-width="2.5"><textPath href="#da" textLength="48">Duplex A86</textPath></text>`;
  s+=layer(DOTS,v=>P(v).map(([x,y])=>`<circle cx="${x}" cy="${y}" r="15" fill="#000" fill-opacity=".54" stroke="none"/>`).join(''));
  r.querySelector('.tiles').innerHTML=`<svg width="1357" height="400" viewBox="40 164 1357 400" fill="none" stroke-linecap="round" stroke-linejoin="round" font-family="'Open Sans','Noto Sans',sans-serif">${s}</svg>`;
});

define('dash-app',`<style>
:host{display:flex;flex-direction:column;height:966px;overflow:hidden}
.one{margin-top:15px;height:509px;flex:none}
.two{margin:20px 12px 0 15px;flex:none;height:400px}
h3,p,h5{margin:0;font-weight:400}
h3{font-size:22px;line-height:34px;color:#333}
p{font-size:13px;line-height:20px;color:#7c7c7c}
h5{font-size:13px;line-height:20px;font-weight:700;color:#333}
.one h3{padding:25px 0 0 25px}.one>p{padding:7px 0 0 25px}
.row{display:flex;gap:30px;padding:10px 0 0 40px}
aside{width:432px}
.h5b{margin-top:20px}
.two h3{padding:25px 0 0 25px}.two p{padding:7px 0 0 25px}
info-pre{margin:10px 25px 0}
hour-histogram{margin:24px 0 0 25px}
</style>
<top-bar><fit-text w="317">Accidentologie in Paris (2012-2013)</fit-text></top-bar>
<content-box class="one">
<h3><fit-text w="169.5">Map of accidents</fit-text></h3>
<p><fit-text w="915.5">This graph represents the position of each accident on the map depending of the injuries of the victims and the range of hours where the accident took place.</fit-text></p>
<div class="row"><leaflet-map></leaflet-map>
<aside><h5><fit-text w="178">Accidents with at least one...</fit-text></h5>
<drop-down style="margin-top:5px">Dead</drop-down>
<h5 class="h5b"><fit-text w="218.5">Select a range of hours of accidents</fit-text></h5>
<range-slider style="margin-top:5px"></range-slider>
<p style="margin-top:13px"><fit-text w="408.5">Note: As it's a big dataset, it can take severals seconds to display data.</fit-text></p>
</aside></div>
</content-box>
<content-box class="two">
<h3><fit-text w="403.5">Average frequency of accidents per hour</fit-text></h3>
<p><fit-text w="375">This histogram shows the average number of accidents per hour</fit-text></p>
<info-pre><fit-text w="343.5">Move the mouse over the graph to show the values</fit-text></info-pre>
<hour-histogram></hour-histogram>
</content-box>`);
</script>
</body>
</html>
